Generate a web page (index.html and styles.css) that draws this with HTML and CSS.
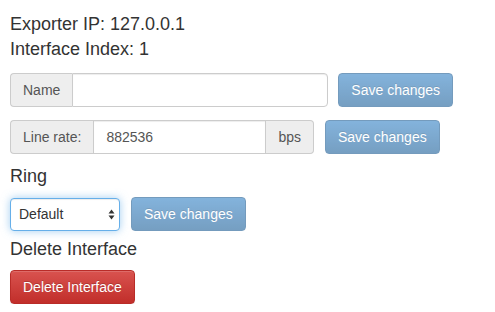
FILE: index.html
```html
<!DOCTYPE html>
<html>
<head>
<meta charset="utf-8">
<link rel="stylesheet" href="styles.css">
</head>
<body>
<div class="page">
  <p class="line first">Exporter IP: 127.0.0.1</p>
  <p class="line">Interface Index: 1</p>
  <div class="row row-name">
    <div class="input-group">
      <span class="addon addon-first">Name</span>
      <input class="control w-name" type="text" value="">
    </div>
    <button class="btn btn-primary" disabled>Save changes</button>
  </div>
  <div class="row row-rate">
    <div class="input-group">
      <span class="addon addon-first">Line rate:</span>
      <input class="control mid w-rate" type="text" value="882536">
      <span class="addon addon-last">bps</span>
    </div>
    <button class="btn btn-primary" disabled>Save changes</button>
  </div>
  <p class="line ring">Ring</p>
  <div class="row row-ring">
    <div class="select-wrap">
      <select class="select focus">
        <option>Default</option>
      </select>
      <svg class="arrows" width="7" height="11" viewBox="0 0 7 11"><path d="M3.5 0.5 L6.5 4.5 L0.5 4.5 Z M3.5 10.5 L6.5 6.5 L0.5 6.5 Z" fill="#333"/></svg>
    </div>
    <button class="btn btn-primary" disabled>Save changes</button>
  </div>
  <p class="line del">Delete Interface</p>
  <div class="row row-del">
    <button class="btn btn-danger">Delete Interface</button>
  </div>
</div>
</body>
</html>
```
FILE: styles.css
```css
html, body {
  margin: 0;
  padding: 0;
  background: #fff;
}
body {
  font-family: "Liberation Sans", Arial, sans-serif;
  color: #333;
  font-size: 14px;
}
.page {
  padding: 12px 10px 0 10px;
}
.line {
  margin: 0;
  font-size: 18px;
  line-height: 25px;
  color: #333;
}
.row {
  display: flex;
  align-items: center;
  gap: 10px;
}
.row-name { margin-top: 11px; }
.row-rate { margin-top: 13px; gap: 11px; }
.ring { margin-top: 10px; }
.row-ring { margin-top: 8px; gap: 11px; }
.del { margin-top: 6px; }
.row-del { margin-top: 8px; }

.input-group {
  display: flex;
  height: 34px;
}
.addon {
  box-sizing: border-box;
  height: 34px;
  padding: 6px 12px;
  font-size: 14px;
  line-height: 20px;
  color: #555;
  background: #eee;
  border: 1px solid #ccc;
}
.addon-first {
  border-radius: 4px 0 0 4px;
  border-right: 0;
}
.addon-last {
  border-radius: 0 4px 4px 0;
  border-left: 0;
}
.control {
  box-sizing: border-box;
  height: 34px;
  margin: 0;
  padding: 6px 12px;
  font-family: "Liberation Sans", Arial, sans-serif;
  font-size: 14px;
  line-height: 20px;
  color: #555;
  background: #fff;
  border: 1px solid #ccc;
  border-radius: 0 4px 4px 0;
  box-shadow: inset 0 1px 1px rgba(0,0,0,.075);
  outline: none;
}
.control.mid { border-radius: 0; }
.w-name { width: 256px; }
.w-rate { width: 173px; }

.btn {
  box-sizing: border-box;
  height: 34px;
  margin: 0;
  padding: 6px 12px;
  font-family: "Liberation Sans", Arial, sans-serif;
  font-size: 14px;
  line-height: 20px;
  color: #fff;
  border: 1px solid transparent;
  border-radius: 4px;
  text-shadow: 0 -1px 0 rgba(0,0,0,.2);
  white-space: nowrap;
}
.btn-primary {
  background-image: linear-gradient(to bottom, #428bca 0, #2d6ca2 100%);
  border-color: #2b669a;
  opacity: .65;
}
.btn-danger {
  background-image: linear-gradient(to bottom, #d9534f 0, #c12e2a 100%);
  border-color: #b92c28;
  box-shadow: inset 0 1px 0 rgba(255,255,255,.15), 0 1px 1px rgba(0,0,0,.075);
}
.select-wrap {
  position: relative;
  width: 110px;
  height: 33px;
}
.select {
  -webkit-appearance: none;
  appearance: none;
  box-sizing: border-box;
  width: 110px;
  height: 33px;
  margin: 0;
  padding: 6px 8px;
  font-family: "Liberation Sans", Arial, sans-serif;
  font-size: 14px;
  color: #333;
  background: #fff;
  border: 1px solid #66afe9;
  border-radius: 4px;
  box-shadow: inset 0 1px 1px rgba(0,0,0,.075), 0 0 8px rgba(102,175,233,.6);
  outline: none;
}
.arrows {
  position: absolute;
  right: 5px;
  top: 11px;
  pointer-events: none;
}
```
